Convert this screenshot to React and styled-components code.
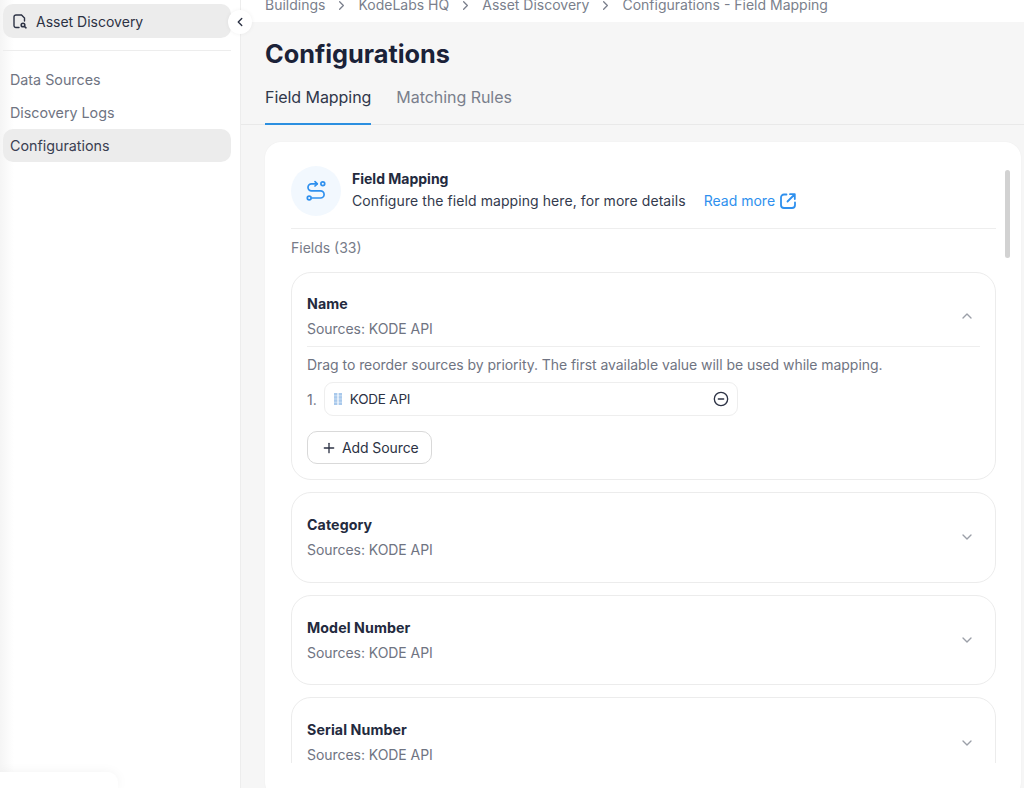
import React from 'react';
import styled, { createGlobalStyle } from 'styled-components';
import { ChevronDown, ChevronLeft, ChevronRight, ChevronUp, CircleMinus, Plus } from 'lucide-react';

const Global = createGlobalStyle`
  html, body { margin: 0; padding: 0; height: 100%; }
  body { font-family: Inter, "Noto Sans", sans-serif; color: #1b2238; background: #fff; }
  * { box-sizing: border-box; }
`;

const Page = styled.div`
  display: flex;
  width: 1024px;
  height: 788px;
  overflow: hidden;
`;

const Sidebar = styled.aside`
  position: relative;
  flex: 0 0 241px;
  display: flex;
  flex-direction: column;
  padding: 4px 9px 0 3px;
  background: linear-gradient(90deg, #f5f5f5, #fff 14px);
  border-right: 1px solid #ededed;
`;

const ModuleItem = styled.div`
  display: flex;
  align-items: center;
  gap: 8px;
  height: 34px;
  padding-left: 10px;
  border-radius: 10px;
  background: #ececec;
  font-size: 14px;
  color: #2c3244;
`;

const Collapse = styled.button`
  position: absolute;
  top: 10px;
  left: 228px;
  width: 24px;
  height: 24px;
  padding: 0;
  display: flex;
  align-items: center;
  justify-content: center;
  border: 0;
  border-radius: 50%;
  background: #fff;
  color: #2c3244;
  box-shadow: 0 0 4px rgba(0, 0, 0, 0.06);
`;

const SideDivider = styled.hr`
  width: 100%;
  margin: 12px 0 12px;
  border: 0;
  border-top: 1px solid #ededed;
`;

const NavItem = styled.div`
  display: flex;
  align-items: center;
  height: 33px;
  padding-left: 7px;
  border-radius: 10px;
  font-size: 14.3px;
  background: ${p => (p.$active ? '#ececec' : 'transparent')};
  color: ${p => (p.$active ? '#3a4052' : '#6f7482')};
`;

const Footer = styled.div`
  position: absolute;
  left: 0;
  bottom: 0;
  width: 118px;
  height: 16px;
  background: #fff;
  border-top-right-radius: 10px;
  box-shadow: 0 0 12px rgba(0, 0, 0, 0.05);
`;

const Main = styled.main`
  flex: 1;
  min-width: 0;
  display: flex;
  flex-direction: column;
  background: #f6f6f6;
`;

const Crumbs = styled.nav`
  flex: 0 0 22px;
  display: flex;
  align-items: flex-end;
  gap: 9px;
  padding: 0 0 9px 24px;
  overflow: hidden;
  background: #fff;
  font-size: 14px;
  line-height: 16px;
  color: #7a7f8c;
`;

const Title = styled.h1`
  margin: 17px 0 0 24px;
  font-size: 25.3px;
  line-height: 30px;
  font-weight: 700;
  color: #1b2238;
`;

const Tabs = styled.div`
  display: flex;
  gap: 25px;
  margin: 15px 0 0 0;
  padding-left: 24px;
  border-bottom: 1px solid #e9e9e9;
`;

const Tab = styled.div`
  height: 41px;
  padding-top: 3px;
  font-size: 16px;
  line-height: 20px;
  letter-spacing: -0.05px;
  margin-bottom: -1px;
  color: ${p => (p.$active ? '#30374a' : '#7a7f8c')};
  border-bottom: 2px solid ${p => (p.$active ? '#2b8fe0' : 'transparent')};
`;

const Card = styled.section`
  position: relative;
  flex: 1;
  min-height: 0;
  margin: 17px 3px -10px 24px;
  padding: 0 25px 35px 26px;
  background: #fff;
  border-radius: 16px;
  box-shadow: 0 0 2px rgba(0, 0, 0, 0.04);
`;

const Scroller = styled.div`
  height: 100%;
  overflow: hidden;
  padding-top: 24px;
`;

const ScrollThumb = styled.div`
  position: absolute;
  top: 28px;
  right: 11px;
  width: 5px;
  height: 88px;
  border-radius: 3px;
  background: #d2d2d2;
`;

const Intro = styled.header`
  display: flex;
  align-items: center;
  gap: 11px;
  height: 63px;
  padding-bottom: 13px;
  border-bottom: 1px solid #eeeeee;
`;

const IconCircle = styled.div`
  flex: 0 0 50px;
  height: 50px;
  display: flex;
  align-items: center;
  justify-content: center;
  border-radius: 50%;
  background: #f2f8fe;
  color: #2f90ee;
`;

const IntroCopy = styled.div`
  margin-bottom: 2px;
`;

const IntroTitle = styled.div`
  font-size: 14px;
  line-height: 20px;
  font-weight: 700;
  color: #232a3e;
`;

const IntroText = styled.div`
  display: flex;
  align-items: center;
  margin-top: 2px;
  font-size: 14px;
  line-height: 20px;
  letter-spacing: 0.08px;
  color: #333a4d;
`;

const ReadMore = styled.a`
  display: flex;
  align-items: center;
  gap: 5px;
  margin-left: 18px;
  letter-spacing: 0;
  color: #2f90ee;
`;

const Count = styled.div`
  margin: 10px 0 15px;
  font-size: 14px;
  line-height: 18px;
  color: #777c89;
`;

const Fields = styled.div`
  display: flex;
  flex-direction: column;
  gap: 12px;
`;

const Field = styled.article`
  flex: none;
  padding: 0 15px;
  border: 1px solid #ececec;
  border-radius: 20px;
  background: #fff;
`;

const FieldHead = styled.div`
  display: flex;
  align-items: center;
  justify-content: space-between;
  height: ${p => (p.$open ? '73px' : '88.7px')};
  padding: ${p => (p.$open ? '13px 5px 0 0' : '0 5px 0 0')};
  color: #9b9fa8;
`;

const FieldName = styled.div`
  font-size: 14.2px;
  line-height: 20px;
  font-weight: 700;
  letter-spacing: 0.1px;
  color: #232a3e;
`;

const FieldSource = styled.div`
  margin-top: 5px;
  font-size: 14px;
  line-height: 20px;
  letter-spacing: -0.05px;
  color: #6f7482;
`;

const FieldBody = styled.div`
  padding-bottom: 15px;
  border-top: 1px solid #eeeeee;
`;

const Hint = styled.p`
  margin: 9px 0 0;
  font-size: 14px;
  line-height: 18px;
  letter-spacing: -0.05px;
  color: #6f7482;
`;

const SourceRow = styled.div`
  display: flex;
  align-items: center;
  gap: 7px;
  margin-top: 8px;
  font-size: 14px;
  color: #6f7482;
`;

const SourceBox = styled.div`
  flex: 0 0 414px;
  display: flex;
  align-items: center;
  height: 34px;
  padding: 0 8px 0 9px;
  border: 1px solid #eeeeee;
  border-radius: 9px;
  font-size: 13.5px;
  letter-spacing: -0.2px;
  color: #2c3244;
`;

const Remove = styled.span`
  display: flex;
  margin-left: auto;
  color: #2c3244;
`;

const AddSource = styled.button`
  display: flex;
  align-items: center;
  gap: 5px;
  height: 33px;
  width: 125px;
  margin-top: 15px;
  padding: 0 0 0 13px;
  border: 1px solid #d9d9d9;
  border-radius: 10px;
  background: #fff;
  font: inherit;
  font-size: 14px;
  letter-spacing: -0.1px;
  color: #2c3244;
`;

const AssetIcon = () => (
  <svg width="15" height="15" viewBox="0 0 15 15" fill="none" stroke="#2c3244" strokeWidth="1.4" strokeLinecap="round">
    <path d="M6 13.5H3a2 2 0 0 1-2-2V3a2 2 0 0 1 2-2h5.500l3 3v3" />
    <circle cx="10" cy="11" r="1.8" strokeWidth="1.6" />
    <path d="M11.500 12.500l1.500 1.300" strokeWidth="1.6" />
  </svg>
);

const MappingIcon = () => (
  <svg width="20" height="22" viewBox="0 0 20 22" fill="none" stroke="currentColor" strokeWidth="1.7" strokeLinecap="round" strokeLinejoin="round">
    <circle cx="16.800" cy="3.800" r="1.900" />
    <circle cx="3.200" cy="18" r="1.900" />
    <path d="M11 3.800H5.500a3.500 3.500 0 0 0 0 7h9a3.600 3.600 0 0 1 0 7.200H6" />
    <path d="M9 1.600l2.300 2.200L9 6" />
  </svg>
);

const ExternalIcon = () => (
  <svg width="16" height="16" viewBox="0 0 16 16" fill="none" stroke="currentColor" strokeWidth="1.8" strokeLinecap="round" strokeLinejoin="round">
    <path d="M6.500 1.500H4a3 3 0 0 0-3 3v7.500a3 3 0 0 0 3 3h8a3 3 0 0 0 3-3V9.500" />
    <path d="M7.500 8.500L14.500 1.500M10 1.200h4.800V6" />
  </svg>
);

const GripIcon = () => (
  <svg width="8" height="12" viewBox="0 0 8 12" fill="#a9c9ec" style={{ marginRight: 8 }}>
    {[0, 3.1, 6.2, 9.3].map(y => (
      <React.Fragment key={y}>
        <rect x="0" y={y} width="3.4" height="2.7" />
        <rect x="4.600" y={y} width="3.4" height="2.7" />
      </React.Fragment>
    ))}
  </svg>
);

const crumbs = ['Buildings', 'KodeLabs HQ', 'Asset Discovery', 'Configurations - Field Mapping'];
const closedFields = ['Category', 'Model Number', 'Serial Number'];

export default function App() {
  return (
    <>
      <Global />
      <Page>
        <Sidebar>
          <ModuleItem><AssetIcon />Asset Discovery</ModuleItem>
          <Collapse><ChevronLeft size={14} strokeWidth={2.4} /></Collapse>
          <SideDivider />
          <NavItem>Data Sources</NavItem>
          <NavItem>Discovery Logs</NavItem>
          <NavItem $active>Configurations</NavItem>
          <Footer />
        </Sidebar>
        <Main>
          <Crumbs>
            {crumbs.map((c, i) => (
              <React.Fragment key={c}>
                {i > 0 && <ChevronRight size={15} />}
                <span>{c}</span>
              </React.Fragment>
            ))}
          </Crumbs>
          <Title>Configurations</Title>
          <Tabs>
            <Tab $active>Field Mapping</Tab>
            <Tab>Matching Rules</Tab>
          </Tabs>
          <Card>
            <ScrollThumb />
            <Scroller>
              <Intro>
                <IconCircle><MappingIcon /></IconCircle>
                <IntroCopy>
                  <IntroTitle>Field Mapping</IntroTitle>
                  <IntroText>
                    Configure the field mapping here, for more details
                    <ReadMore>Read more <ExternalIcon /></ReadMore>
                  </IntroText>
                </IntroCopy>
              </Intro>
              <Count>Fields (33)</Count>
              <Fields>
                <Field>
                  <FieldHead $open>
                    <div>
                      <FieldName>Name</FieldName>
                      <FieldSource>Sources: KODE API</FieldSource>
                    </div>
                    <ChevronUp size={16} />
                  </FieldHead>
                  <FieldBody>
                    <Hint>Drag to reorder sources by priority. The first available value will be used while mapping.</Hint>
                    <SourceRow>
                      1.
                      <SourceBox>
                        <GripIcon />
                        KODE API
                        <Remove><CircleMinus size={16} /></Remove>
                      </SourceBox>
                    </SourceRow>
                    <AddSource><Plus size={16} />Add Source</AddSource>
                  </FieldBody>
                </Field>
                {closedFields.map(name => (
                  <Field key={name}>
                    <FieldHead>
                      <div>
                        <FieldName>{name}</FieldName>
                        <FieldSource>Sources: KODE API</FieldSource>
                      </div>
                      <ChevronDown size={16} />
                    </FieldHead>
                  </Field>
                ))}
              </Fields>
            </Scroller>
          </Card>
        </Main>
      </Page>
    </>
  );
}
